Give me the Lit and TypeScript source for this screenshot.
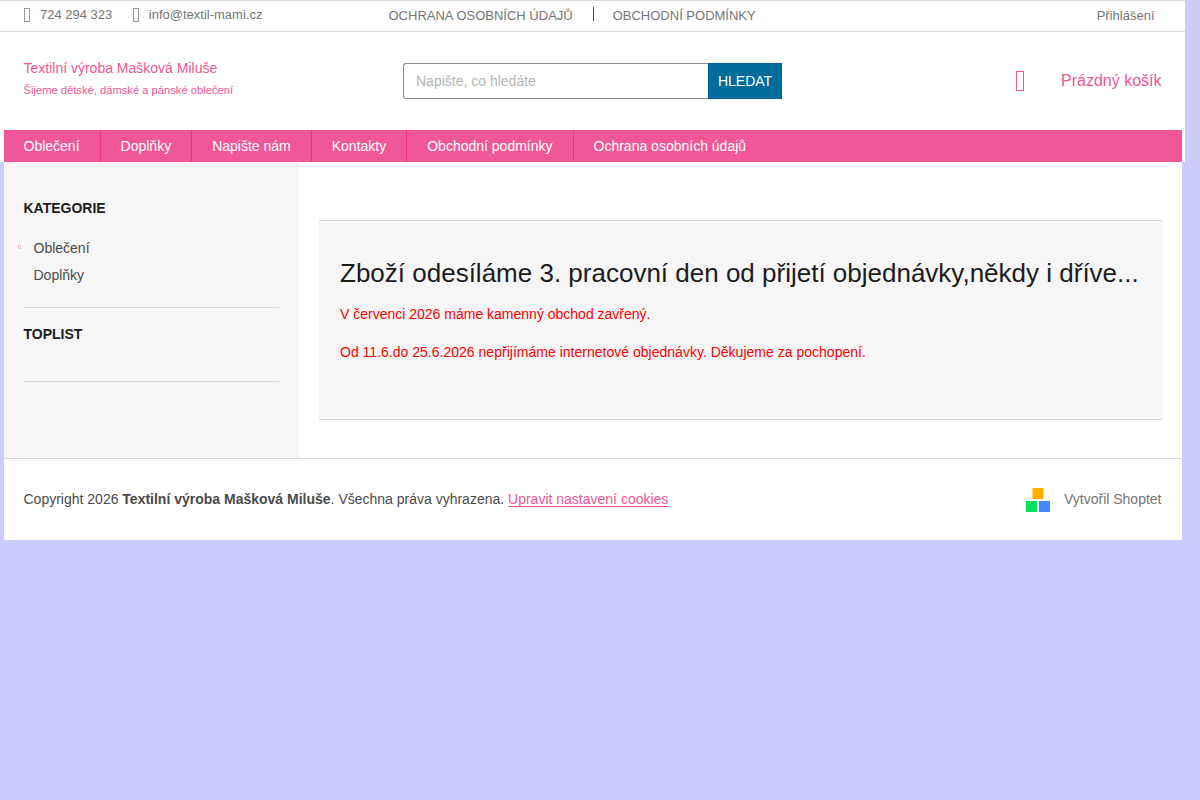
import { LitElement, html, css, svg } from "lit";
import { customElement } from "lit/decorators.js";

const glyph = (w: number, h: number) => html`<svg class="glyph" width=${w} height=${h} viewBox="0 0 ${w} ${h}">
  ${svg`<rect x="0.5" y="0.5" width=${w - 1} height=${h - 1} fill="none" stroke="currentColor"/>`}
</svg>`;

@customElement("app-root")
export class AppRoot extends LitElement {
  static styles = css`
    :host {
      display: block;
      min-height: 800px;
      background: #ccccfc;
      font: 14px/20px "Liberation Sans", Arial, sans-serif;
      color: #4a4a4a;
    }
    * { box-sizing: border-box; }
    a { color: inherit; text-decoration: none; }
    svg { display: block; flex: none; }
    ul { list-style: none; margin: 0; padding: 0; }
    .top {
      width: 1185px;
      height: 32px;
      display: grid;
      grid-template-columns: 388.5px 1fr auto;
      background: #fff;
      border-top: 1px solid #d8d8d8;
      border-bottom: 1px solid #d8d8d8;
      font-size: 13px;
      line-height: 18px;
      color: #757575;
    }
    .contacts { display: flex; padding: 5px 0 0 24px; }
    .contact { display: flex; }
    .contact .glyph { margin: 2px 10px 0 0; color: #9a9a9a; }
    .phone { margin-right: 20.5px; }
    .links { display: flex; padding-top: 6px; }
    .sep { width: 1px; height: 14px; margin: 0 19px 0 20px; background: #4a4a4a; }
    .login { padding: 6px 30.5px 0 0; }
    .header {
      width: 1185px;
      height: 98px;
      display: grid;
      grid-template-columns: 403px 379px 1fr;
      background: #fff;
      color: #ef5696;
    }
    .brand { padding: 26px 0 0 23.5px; }
    .brand h1, .brand p { margin: 0; font-weight: 400; }
    .brand h1 { font-size: 14px; line-height: 20px; }
    .brand p { font-size: 11.2px; line-height: 16px; margin-top: 4px; }
    .search { display: flex; height: 36px; margin-top: 31px; }
    .search input {
      flex: 1;
      min-width: 0;
      height: 36px;
      padding: 0 12px;
      border: 1px solid #8c8c8c;
      border-right: 0;
      border-radius: 3px 0 0 3px;
      background: #fff;
      font: inherit;
    }
    .search input::placeholder { color: #b5b5b5; opacity: 1; }
    .search button {
      width: 74px;
      height: 36px;
      padding: 0;
      border: 1px solid #006496;
      background: #006d9c;
      color: #fff;
      font: inherit;
    }
    .cart {
      display: flex;
      justify-content: flex-end;
      gap: 37px;
      padding: 38px 23.5px 0 0;
      font-size: 16px;
      line-height: 22px;
    }
    .cart .glyph { margin-top: 1px; }
    .navwrap { width: 1185px; padding: 0 3.5px; background: #fff; }
    .nav { display: flex; height: 32px; background: #f15796; color: #fff; }
    .nav a { padding: 0 20px; line-height: 32px; border-right: 1px solid #ef3583; }
    .nav a:last-child { border: 0; }
    .page { width: 1178px; margin-left: 3.5px; background: #fff; }
    .body { display: grid; grid-template-columns: 295px 1fr; height: 296px; }
    .side { padding: 36px 20px 0; background: #f6f6f6; }
    .side h4 { margin: 0; font-size: 14px; line-height: 20px; color: #1c1c1c; }
    .cats { padding: 16px 0 19px; border-bottom: 1px solid #d8d8d8; }
    .cats li { display: flex; height: 27px; padding: 4px 0 0 10px; }
    .cats .glyph { margin: 7px 13px 0 -16px; color: #f9c4d8; }
    .toplist { height: 74px; padding-top: 16px; border-bottom: 1px solid #d8d8d8; }
    .main { padding: 58px 20px 0; }
    .banner {
      height: 200px;
      padding: 35px 20px 0 21.5px;
      background: #f6f6f6;
      border-top: 1px solid #d8d8d8;
      border-bottom: 1px solid #d8d8d8;
      color: #f00;
    }
    .banner h2 { margin: 0; font-size: 26px; line-height: 34px; font-weight: 400; color: #1c1c1c; white-space: nowrap; }
    .banner p { margin: 14px 0 18px; }
    .banner p + p { margin-top: 0; letter-spacing: 0.013px; }
    .footer {
      display: flex;
      justify-content: space-between;
      height: 82px;
      padding: 30px 20px 0;
      border-top: 1px solid #d8d8d8;
    }
    .cookies {
      color: #ef5696;
      text-decoration: underline;
      text-decoration-skip-ink: none;
      text-decoration-thickness: 1px;
      text-underline-offset: 2px;
    }
    .credit { display: flex; gap: 14px; color: #757575; }
    .credit svg { margin-top: -1px; }
  `;

  render() {
    const nav = ["Oblečení", "Doplňky", "Napište nám", "Kontakty", "Obchodní podmínky", "Ochrana osobních údajů"];
    return html`
      <div class="top">
        <div class="contacts">
          <a class="contact phone">${glyph(6, 14)}<span>724 294 323</span></a>
          <a class="contact">${glyph(6, 14)}<span>info@textil-mami.cz</span></a>
        </div>
        <div class="links"><a>OCHRANA OSOBNÍCH ÚDAJŮ</a><span class="sep"></span><a>OBCHODNÍ PODMÍNKY</a></div>
        <a class="login">Přihlášení</a>
      </div>
      <header class="header">
        <div class="brand"><h1>Textilní výroba Mašková Miluše</h1><p>Šijeme dětské, dámské a pánské oblečení</p></div>
        <div class="search"><input placeholder="Napište, co hledáte" /><button>HLEDAT</button></div>
        <div class="cart">${glyph(8, 20)}<span>Prázdný košík</span></div>
      </header>
      <div class="navwrap"><nav class="nav">${nav.map((t) => html`<a>${t}</a>`)}</nav></div>
      <div class="page">
        <div class="body">
          <aside class="side">
            <h4>KATEGORIE</h4>
            <ul class="cats"><li>${glyph(3, 4)}<a>Oblečení</a></li><li><a>Doplňky</a></li></ul>
            <div class="toplist"><h4>TOPLIST</h4></div>
          </aside>
          <main class="main">
            <div class="banner">
              <h2>Zboží odesíláme 3. pracovní den od přijetí objednávky,někdy i dříve...</h2>
              <p>V červenci 2026 máme kamenný obchod zavřený.</p>
              <p>Od 11.6.do 25.6.2026 nepřijímáme internetové objednávky. Děkujeme za pochopení.</p>
            </div>
          </main>
        </div>
        <footer class="footer">
          <span>Copyright 2026 <b>Textilní výroba Mašková Miluše</b>. Všechna práva vyhrazena. <a class="cookies">Upravit nastavení cookies</a></span>
          <a class="credit">
            <svg width="24" height="24" viewBox="0 0 24 24">
              <path d="M6.5 0h11v11h-11z" fill="#ffb000"/>
              <path d="M0 13h11v11H0z" fill="#00e35b"/>
              <path d="M13 13h11v11H13z" fill="#3d8bff"/>
            </svg>
            <span>Vytvořil Shoptet</span>
          </a>
        </footer>
      </div>
    `;
  }
}
